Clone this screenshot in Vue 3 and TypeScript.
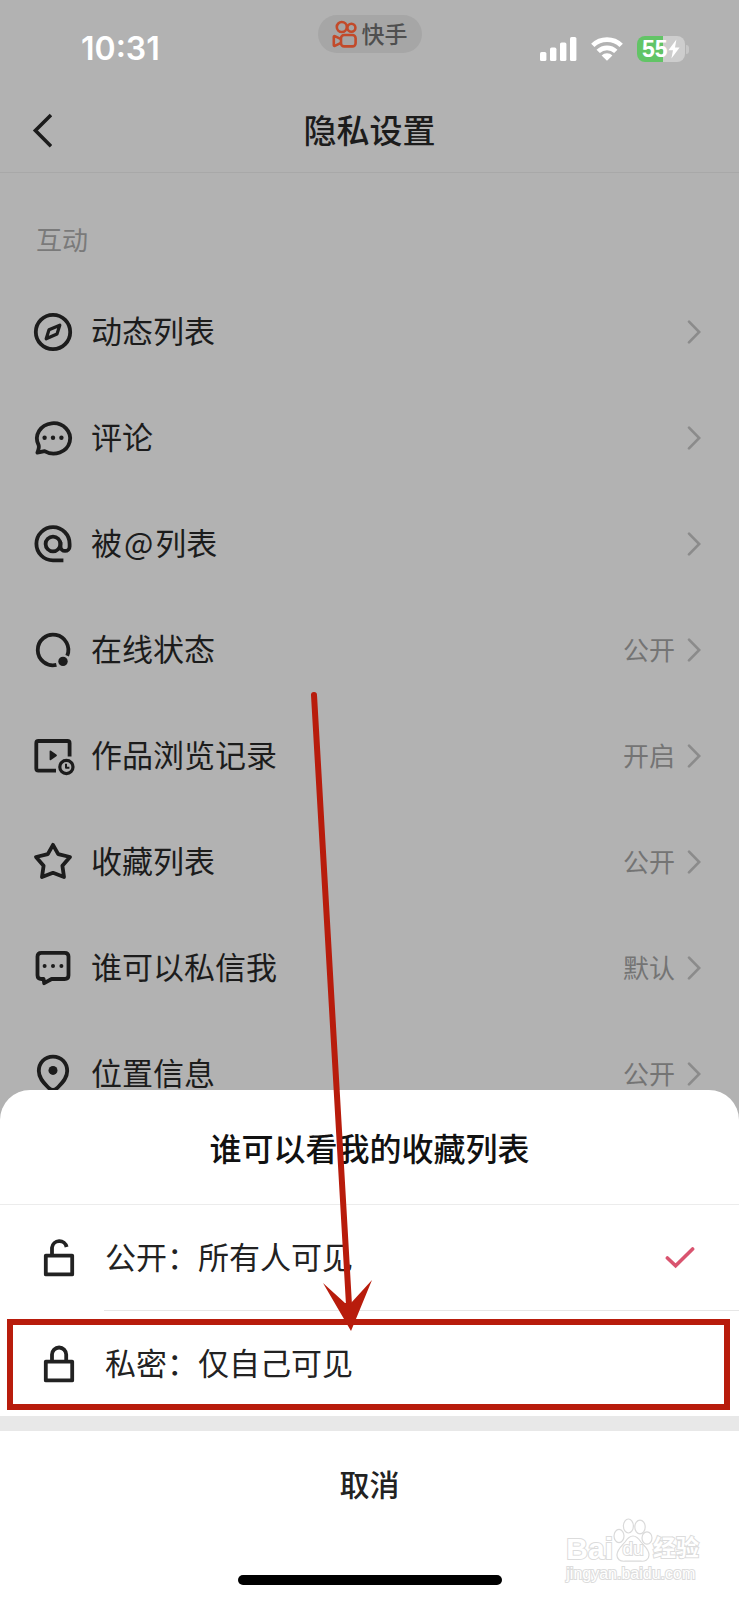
<script setup lang="ts">
import { ref } from 'vue'

type IconName = 'compass' | 'comment' | 'at' | 'online' | 'history' | 'star' | 'message' | 'pin'

interface SettingRow {
  icon: IconName
  label: string
  value?: string
}

interface VisibilityOption {
  id: 'public' | 'private'
  label: string
}

const rows: SettingRow[] = [
  { icon: 'compass', label: '动态列表' },
  { icon: 'comment', label: '评论' },
  { icon: 'at', label: '被@列表' },
  { icon: 'online', label: '在线状态', value: '公开' },
  { icon: 'history', label: '作品浏览记录', value: '开启' },
  { icon: 'star', label: '收藏列表', value: '公开' },
  { icon: 'message', label: '谁可以私信我', value: '默认' },
  { icon: 'pin', label: '位置信息', value: '公开' },
]

const options: VisibilityOption[] = [
  { id: 'public', label: '公开：所有人可见' },
  { id: 'private', label: '私密：仅自己可见' },
]

const selected = ref<VisibilityOption['id']>('public')

// Splits a label so that an "@" can be given room on both sides.
const parts = (label: string): string[] => label.split(/(@)/)
</script>

<template>
  <div class="screen">
    <div class="status">
      <div class="time">10:31</div>
      <div class="pill">
        <svg class="pill-logo" viewBox="0 0 26 28" aria-hidden="true">
          <g fill="none" stroke="#c24a2a" stroke-width="2.6" stroke-linejoin="round">
            <circle cx="9.8" cy="7" r="5" />
            <circle cx="19.4" cy="7.8" r="4" />
            <rect x="9" y="15" width="14.6" height="11.4" rx="3.2" />
            <path d="M9 19.2 L2.8 16.2 Q1.8 16 1.8 17 V25 Q1.8 26.2 2.8 25.8 L9 22.8" />
          </g>
        </svg>
        <span>快手</span>
      </div>
      <div class="indicators">
        <svg class="signal" viewBox="0 0 37 26" aria-hidden="true">
          <g fill="#fff">
            <rect x="0" y="16" width="6.4" height="9" rx="1.6" />
            <rect x="10" y="11.6" width="6.4" height="13.4" rx="1.6" />
            <rect x="20" y="6.4" width="6.4" height="18.6" rx="1.6" />
            <rect x="30" y="1" width="6.4" height="24" rx="1.6" />
          </g>
        </svg>
        <svg class="wifi" viewBox="0 0 32 26" aria-hidden="true">
          <g fill="none" stroke="#fff" stroke-width="4.8">
            <path d="M1.8 9.4 A20.4 20.4 0 0 1 30.2 9.4" />
            <path d="M7.2 15.4 A12.6 12.6 0 0 1 24.8 15.4" />
          </g>
          <path fill="#fff" d="M16 24.8 L10.6 19.4 A7.6 7.6 0 0 1 21.4 19.4 Z" />
        </svg>
        <div class="battery">
          <span>55</span>
          <svg class="bolt" viewBox="0 0 12 20" aria-hidden="true">
            <path fill="#fff" d="M8.4 0.6 L0.4 11.2 H5 L3.4 19.4 L11.6 8.4 H7 Z" />
          </svg>
        </div>
        <i class="battery-cap"></i>
      </div>
    </div>

    <header class="nav">
      <button class="back" type="button" aria-label="返回">
        <svg viewBox="0 0 20 36" aria-hidden="true">
          <path d="M19 2 L3.4 17.6 L19 33.2" fill="none" stroke="#1c1c1c" stroke-width="3.6" />
        </svg>
      </button>
      <h1>隐私设置</h1>
    </header>

    <main>
      <h2 class="section">互动</h2>
      <button v-for="row in rows" :key="row.label" class="row" type="button">
        <svg class="icon" viewBox="0 0 44 44" aria-hidden="true">
          <g v-if="row.icon === 'compass'">
            <circle cx="22" cy="22" r="17.2" />
            <path class="thin" d="M28.8 15.2 L26 24 L15.2 28.8 L18 19.8 Z" />
          </g>
          <g v-else-if="row.icon === 'comment'">
            <path d="M6.4 36.6 C7.8 33 8.4 31 7.6 29 A16.6 15.2 0 1 1 13.6 35.2 Q10 36 6.4 36.6 Z" />
            <g class="solid">
              <circle cx="13.6" cy="21.8" r="2.2" />
              <circle cx="22" cy="21.8" r="2.2" />
              <circle cx="30.4" cy="21.8" r="2.2" />
            </g>
          </g>
          <g v-else-if="row.icon === 'at'">
            <circle cx="22" cy="22" r="7.4" />
            <path d="M32.4 38.4 H22 A16.6 16.6 0 1 1 38.6 22 V24.4 A4.5 4.5 0 0 1 29.5 24.4 V20" />
          </g>
          <g v-else-if="row.icon === 'online'">
            <path d="M25.4 36.9 A15.3 15.3 0 1 1 36.2 27.8" />
            <circle class="solid" cx="32" cy="33.4" r="4.7" />
          </g>
          <g v-else-if="row.icon === 'history'">
            <path d="M25 36.6 H7.4 Q5.3 36.6 5.3 34.5 V9.2 Q5.3 7 7.4 7 H36.4 Q38.6 7 38.6 9.2 V22.6" />
            <path class="solid" d="M18.6 17.6 Q18.6 15.8 20 16.8 L25.4 20.4 Q26.6 21.3 25.4 22.2 L20 26 Q18.6 26.9 18.6 25.2 Z" />
            <circle class="thin" cx="35.4" cy="33" r="6.6" />
            <path class="hair" d="M35 29.8 V33.8 H38.4" />
          </g>
          <g v-else-if="row.icon === 'star'">
            <path d="M22 4.8 L27.2 14.2 L39 17 L31.4 25.8 L33 37 L22 32.8 L11 37 L12.6 25.8 L5 17 L16.8 14.2 Z" />
          </g>
          <g v-else-if="row.icon === 'message'">
            <path d="M10.4 6.8 H33.6 Q37.5 6.8 37.5 10.6 V29.2 Q37.5 33 33.6 33 H20.6 L13.2 37.2 L12.6 33 H10.4 Q6.5 33 6.5 29.2 V10.6 Q6.5 6.8 10.4 6.8 Z" />
            <g class="solid">
              <circle cx="13.6" cy="20" r="2" />
              <circle cx="22" cy="20" r="2" />
              <circle cx="30.4" cy="20" r="2" />
            </g>
          </g>
          <g v-else>
            <path d="M22 4.6 C30.4 4.6 36.2 11 36.2 19 C36.2 27 30 32 26 36.2 Q22 40 18 36.2 C14 32 7.8 27 7.8 19 C7.8 11 13.6 4.6 22 4.6 Z" />
            <circle class="solid" cx="22" cy="18.4" r="4.5" />
          </g>
        </svg>
        <span class="label"><span v-for="(part, i) in parts(row.label)" :key="i" :class="{ at: part === '@' }">{{ part }}</span></span>
        <span v-if="row.value" class="value">{{ row.value }}</span>
        <svg class="chevron" viewBox="0 0 14 26" aria-hidden="true">
          <path d="M2 2.6 L12.2 13 L2 23.4" fill="none" stroke="#8b8b8b" stroke-width="2.6" stroke-linecap="round" />
        </svg>
      </button>
    </main>

    <section class="sheet" role="dialog" aria-labelledby="sheet-title">
      <h2 id="sheet-title" class="sheet-title">谁可以看我的收藏列表</h2>
      <label v-for="option in options" :key="option.id" class="option" :class="option.id">
        <input v-model="selected" type="radio" name="visibility" :value="option.id" />
        <svg class="icon" viewBox="0 0 44 44" aria-hidden="true">
          <path v-if="option.id === 'public'" d="M8.8 19.6 H35.2 V38.4 H8.8 Z M15 19.6 V11.6 A7.4 7.4 0 0 1 29.6 11" />
          <path v-else d="M8.8 19.6 H35.2 V38.4 H8.8 Z M15 19.6 V12.6 A7.1 7.1 0 0 1 29.2 12.6 V19.6" />
        </svg>
        <span class="option-text">{{ option.label }}</span>
        <svg v-if="selected === option.id" class="tick" viewBox="0 0 30 24" aria-hidden="true">
          <path d="M2.4 12 L10.6 19.8 L27.6 3" fill="none" stroke="#d9546f" stroke-width="3.6" stroke-linecap="round" />
        </svg>
      </label>
      <button class="cancel" type="button">取消</button>
      <div class="footer">
        <i class="home"></i>
      </div>
      <div class="watermark">
        <div class="brand">
          <span class="outlined">Bai</span>
          <span class="paw">
            <svg viewBox="0 0 40 44" aria-hidden="true">
              <g fill="#fff" stroke="#dadada" stroke-width="1.2">
                <ellipse cx="6" cy="18" rx="5" ry="6.6" />
                <ellipse cx="15.4" cy="8" rx="5" ry="7" />
                <ellipse cx="27" cy="9" rx="5.2" ry="6.8" />
                <ellipse cx="34" cy="20" rx="5" ry="6.2" />
                <path d="M20 18 C24 18 26 21 28 24 C31 28 36 31 36 37 C36 41.6 32 43.6 28 43.2 H12 C7 43.6 3.6 41 4 36.6 C4.4 31 9 28 12 24 C14 21 16 18 20 18 Z" />
              </g>
            </svg>
            <span class="du">du</span>
          </span>
          <span class="outlined cjk">经验</span>
        </div>
        <div class="domain">jingyan.baidu.com</div>
      </div>
      <svg class="arrow" viewBox="0 0 64 642" aria-hidden="true">
        <path d="M5 6 L40 616" stroke="#b81c0c" stroke-width="6" stroke-linecap="round" />
        <path d="M14 594 L36 614 H42 L63 591 L42 642 Z" fill="#b81c0c" />
      </svg>
    </section>
  </div>
</template>

<style>
body {
  margin: 0;
  background: #b2b2b2;
}
</style>

<style scoped>
.screen {
  position: relative;
  height: 100vh;
  background: #b2b2b2;
  color: #1c1c1c;
  font-family: 'Noto Sans CJK SC', sans-serif;
  overflow: hidden;
}

h1,
h2 {
  margin: 0;
}

button {
  border: 0;
  padding: 0;
  background: none;
  color: inherit;
  font: inherit;
}

.status {
  display: grid;
  grid-template-columns: 1fr auto 1fr;
  height: 75px;
  padding: 15px 50px 0 81px;
}

.time {
  margin-top: 14px;
  color: #fff;
  font: 600 32px/40px Inter, sans-serif;
}

.pill {
  display: flex;
  align-items: center;
  gap: 4px;
  height: 38px;
  margin-left: -31px;
  padding: 0 14px;
  border-radius: 19px;
  background: #a6a6a6;
  color: #4f4f4f;
  font-size: 23px;
  font-weight: 500;
  line-height: 34px;
}

.pill span {
  padding-bottom: 2px;
}

.pill-logo {
  width: 26px;
  height: 28px;
}

.indicators {
  display: flex;
  justify-content: flex-end;
  align-items: center;
  height: 26px;
  margin-top: 21px;
}

.signal {
  width: 37px;
  height: 26px;
}

.wifi {
  width: 32px;
  height: 26px;
  margin: 0 14px;
}

.battery {
  display: flex;
  align-items: center;
  box-sizing: border-box;
  width: 48px;
  height: 26px;
  padding-left: 5px;
  border-radius: 8px;
  background: linear-gradient(to right, #62c466 55%, #cdcdcd 55%);
  color: #fff;
  font: 700 23px/26px 'Liberation Sans', sans-serif;
}

.bolt {
  width: 12px;
  height: 20px;
}

.battery-cap {
  width: 3px;
  height: 9px;
  margin-left: 1px;
  border-radius: 0 3px 3px 0;
  background: #c6c6c6;
}

.nav {
  display: grid;
  grid-template-columns: 60px 1fr 60px;
  align-items: center;
  height: 82px;
  border-bottom: 1px solid #a8a8a8;
}

.back {
  padding-left: 32px;
  height: 36px;
}

.back svg {
  display: block;
  width: 20px;
  height: 36px;
}

h1 {
  padding-bottom: 4px;
  font-size: 33px;
  font-weight: 500;
  line-height: 48px;
  text-align: center;
}

.section {
  padding: 48px 37px 22px 36px;
  color: #7a7a7a;
  font-size: 26px;
  font-weight: 400;
  line-height: 36px;
}

.row {
  display: flex;
  align-items: center;
  width: 100%;
  height: 106px;
  padding: 0 38px 0 31px;
  text-align: left;
}

.icon {
  flex: none;
  width: 44px;
  height: 44px;
  fill: none;
  stroke: #1c1c1c;
  stroke-width: 3.8;
  stroke-linejoin: round;
}

.icon .thin {
  stroke-width: 3.2;
}

.icon .hair {
  stroke-width: 2;
}

.icon .solid {
  fill: #1c1c1c;
  stroke: none;
}

.label {
  flex: 1;
  margin-left: 16px;
  padding-bottom: 4px;
  font-size: 31px;
  line-height: 44px;
}

.at {
  padding: 0 2px;
}

.value {
  padding-bottom: 2px;
  color: #747474;
  font-size: 26px;
  line-height: 36px;
}

.chevron {
  width: 14px;
  height: 26px;
  margin-left: 12px;
}

.sheet {
  position: absolute;
  right: 0;
  bottom: 0;
  left: 0;
  border-radius: 30px 30px 0 0;
  background: #fff;
}

.sheet-title {
  padding: 33px 0;
  border-bottom: 1px solid #ececec;
  color: #111;
  font-size: 32px;
  font-weight: 500;
  line-height: 48px;
  text-align: center;
}

.option {
  position: relative;
  display: flex;
  align-items: center;
  height: 106px;
  padding: 0 44px 0 37px;
}

.option.private {
  height: 105px;
}

.option input {
  position: absolute;
  inset: 0;
  margin: 0;
  appearance: none;
}

.option .icon {
  stroke: #222;
}

.option-text {
  flex: 1;
  margin-left: 24px;
  padding-bottom: 4px;
  color: #222;
  font-size: 31px;
  line-height: 44px;
}

.tick {
  width: 30px;
  height: 24px;
}

.public::after {
  content: '';
  position: absolute;
  right: 0;
  bottom: 0;
  left: 104px;
  height: 1px;
  background: #e6e6e6;
}

.private::after {
  content: '';
  position: absolute;
  inset: 8px 9px 6px 7px;
  border: 6px solid #b81c0c;
}

.cancel {
  display: block;
  width: 100%;
  height: 125px;
  padding-bottom: 6px;
  border-top: 15px solid #e8e8e8;
  color: #222;
  font-size: 30px;
  font-weight: 500;
  line-height: 44px;
}

.footer {
  display: flex;
  justify-content: center;
  align-items: flex-end;
  height: 44px;
  padding-bottom: 15px;
}

.home {
  width: 264px;
  height: 10px;
  border-radius: 5px;
  background: #000;
}

.watermark {
  position: absolute;
  right: 40px;
  bottom: 14px;
  color: #fff;
  font-family: 'Liberation Sans', 'Noto Sans CJK SC', sans-serif;
}

.brand {
  display: flex;
  align-items: flex-end;
  height: 44px;
}

.outlined,
.du,
.domain {
  -webkit-text-stroke: 2px #dcdcdc;
  paint-order: stroke fill;
}

.outlined {
  font-size: 30px;
  font-weight: 700;
  line-height: 27px;
}

.cjk {
  font-size: 23px;
}

.paw {
  position: relative;
  width: 40px;
  height: 44px;
}

.paw svg {
  display: block;
  width: 40px;
  height: 44px;
}

.du {
  position: absolute;
  right: 0;
  bottom: 3px;
  left: 0;
  font-size: 19px;
  line-height: 20px;
  text-align: center;
}

.domain {
  font-size: 16px;
  line-height: 24px;
}

.arrow {
  position: absolute;
  bottom: 269px;
  left: calc(50% - 61px);
  width: 64px;
  height: 642px;
  fill: none;
  pointer-events: none;
}
</style>
